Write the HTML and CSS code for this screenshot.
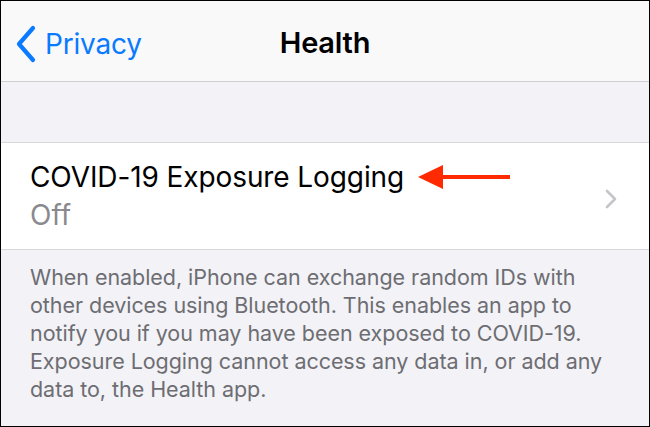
FILE: index.html
```html
<!DOCTYPE html>
<html>
<head>
<meta charset="utf-8">
<link rel="stylesheet" href="styles.css">
</head>
<body>
<div class="screen">
  <header class="nav">
    <div class="back">
      <svg class="back-chev" width="22" height="38" viewBox="0 0 22 38"><path d="M18 3 L4 19 L18 35" fill="none" stroke="#0a7aff" stroke-width="4.2" stroke-linecap="round" stroke-linejoin="round"/></svg>
      <span class="back-label">Privacy</span>
    </div>
    <h1 class="title">Health</h1>
  </header>
  <div class="gap"></div>
  <div class="cell">
    <div class="cell-text">
      <div class="cell-title">COVID-19 Exposure Logging <span class="arrow"><svg width="92" height="26" viewBox="0 0 92 26"><path d="M0 13 L25 1 L25 25 Z" fill="#ff2a00"/><rect x="22" y="11" width="70" height="4" fill="#ff2a00"/></svg></span></div>
      <div class="cell-sub">Off</div>
    </div>
    <svg class="chev" width="14" height="22" viewBox="0 0 14 22"><path d="M3 3 L11 11 L3 19" fill="none" stroke="#c4c4c9" stroke-width="2.6" stroke-linecap="round" stroke-linejoin="round"/></svg>
  </div>
  <p class="footer">When enabled, iPhone can exchange random IDs with other devices using Bluetooth. This enables an app to notify you if you may have been exposed to COVID-19. Exposure Logging cannot access any data in, or add any data to, the Health app.</p>
</div>
</body>
</html>
```
FILE: styles.css
```css
html, body { margin: 0; padding: 0; }
body { font-family: Inter, "Noto Sans", sans-serif; }
.screen {
  width: 650px; height: 427px; box-sizing: border-box;
  border: 1px solid #000; background: #f2f2f7; overflow: hidden;
  display: flex; flex-direction: column;
}
.nav {
  height: 80px; background: #f9f9fa; border-bottom: 1px solid #cfcfd3;
  position: relative; display: flex; align-items: center; justify-content: center;
  flex-shrink: 0;
}
.back {
  position: absolute; left: 14px; top: 24px;
  display: flex; align-items: center; gap: 8px;
}
.back-label { color: #0a7aff; font-size: 28px; letter-spacing: -0.2px; }
.title { margin: 2px 0 0; font-size: 29px; font-weight: 600; color: #000; letter-spacing: -0.2px; }
.gap { height: 60px; flex-shrink: 0; }
.cell {
  background: #fff; border-top: 1px solid #d8d8dc; border-bottom: 1px solid #d8d8dc;
  height: 106px; box-sizing: content-box; flex-shrink: 0;
  display: flex; align-items: center; padding: 0 31px 0 29px;
}
.cell-text { flex: 1; }
.cell-title { font-size: 28px; line-height: 34px; color: #000; display: flex; align-items: center; letter-spacing: -0.1px; margin-top: -1px; }
.arrow { display: inline-flex; margin-left: 14px; }
.cell-sub { font-size: 28px; line-height: 34px; color: #8a8a8e; margin-top: 4px; }
.chev { flex-shrink: 0; margin-top: 6px; }
.footer {
  margin: 0; padding: 13px 24px 0 29px; font-size: 21.5px; line-height: 28px;
  color: #6d6d72; letter-spacing: -0.05px;
}
```
